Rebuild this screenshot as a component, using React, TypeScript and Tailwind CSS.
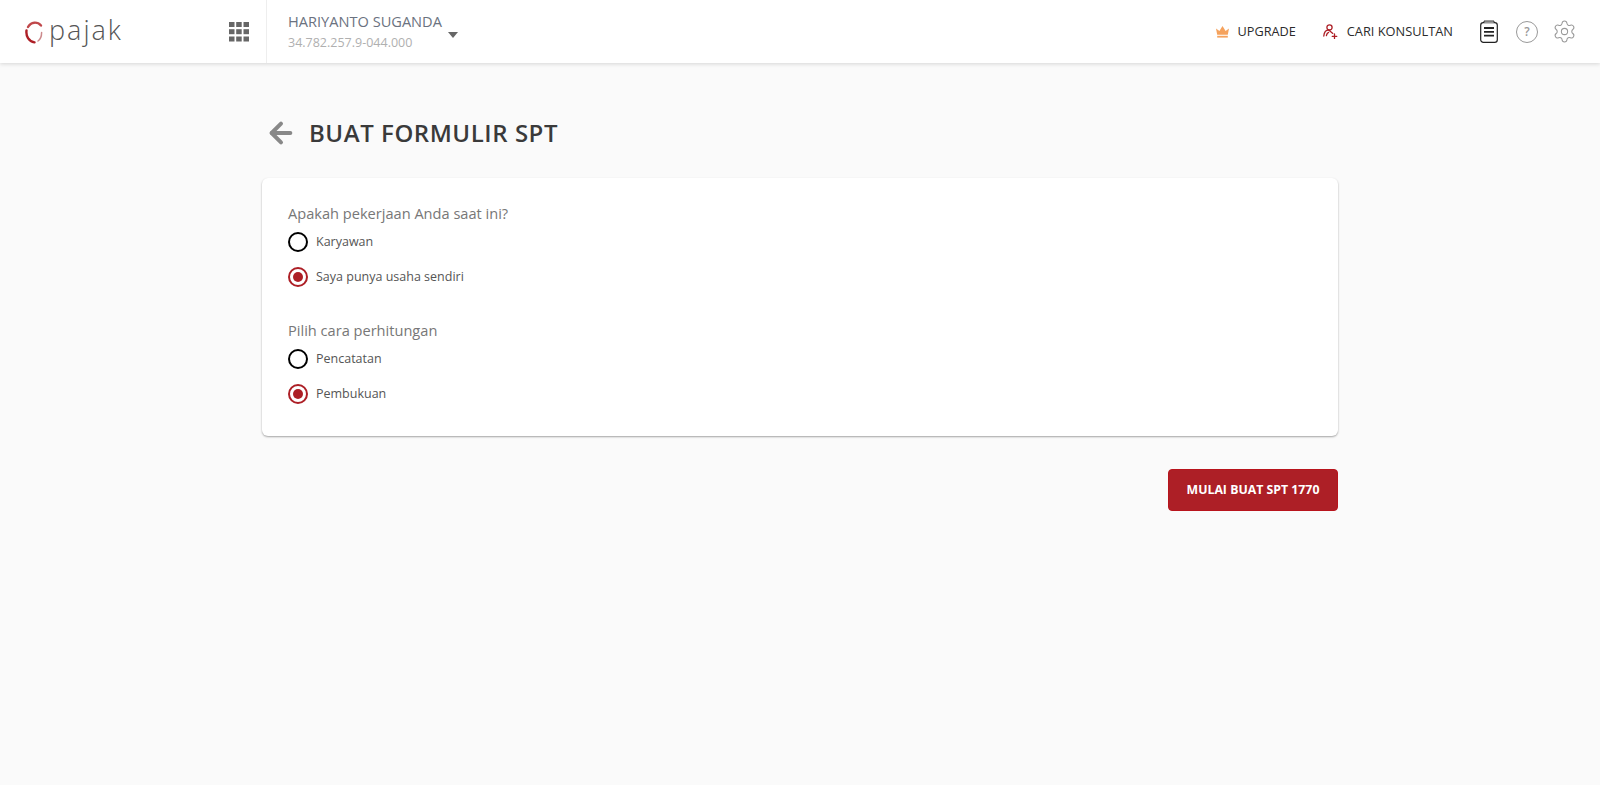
import React from 'react';
import { ArrowLeft, Settings } from 'lucide-react';

const GridIcon = () => (
  <svg width="20" height="20" viewBox="0 0 20 20" fill="#666666">
    <rect x="0" y="0" width="5.5" height="5" />
    <rect x="7.2" y="0" width="5.5" height="5" />
    <rect x="14.5" y="0" width="5.5" height="5" />
    <rect x="0" y="7.2" width="5.5" height="5" />
    <rect x="7.2" y="7.2" width="5.5" height="5" />
    <rect x="14.5" y="7.2" width="5.5" height="5" />
    <rect x="0" y="14.5" width="5.5" height="5" />
    <rect x="7.2" y="14.5" width="5.5" height="5" />
    <rect x="14.5" y="14.5" width="5.5" height="5" />
  </svg>
);

const LogoRing = () => (
  <svg width="18" height="24" viewBox="0 0 18 24" fill="none" strokeLinecap="round">
    <path d="M3 7 C 6 1.5 12.5 1.5 16 5.5" stroke="#c0474a" strokeWidth="2.4" />
    <path d="M1.5 10.5 C 0.8 16 3.6 21.5 9.5 22.4" stroke="#ad1f26" strokeWidth="2.4" />
    <path d="M13 21 C 15.4 19.4 16.6 16.4 16.6 12.5" stroke="#cc8a8c" strokeWidth="1.5" />
  </svg>
);

const CrownIcon = () => (
  <svg width="13" height="12" viewBox="0 0 13 12" fill="#f5a25d">
    <path d="M0 2.5 L3.4 5 L6.5 0 L9.6 5 L13 2.5 L11.8 8.8 H1.2 Z" />
    <rect x="1.2" y="9.8" width="10.6" height="1.8" />
  </svg>
);

const ConsultantIcon = () => (
  <svg width="15" height="15" viewBox="0 0 15 15" fill="none" stroke="#ad1f26" strokeWidth="1.3" strokeLinecap="round">
    <circle cx="6.5" cy="3.4" r="2.6" />
    <path d="M0.8 12 C 1.2 8 3 6 5.5 6" />
    <path d="M3.4 11.5 C 3.8 9.8 4.6 8.8 5.6 8.4" />
    <path d="M6 6.2 L 9.8 9.4" />
    <path d="M11.5 10 V 14.6 M9.2 12.3 H 13.8" />
  </svg>
);

const ClipboardIcon = () => (
  <svg width="18" height="23" viewBox="0 0 18 23" fill="none" stroke="#222222">
    <rect x="0.7" y="2.7" width="16.6" height="19.6" rx="2.6" strokeWidth="1.2" />
    <path d="M4 2.7 V 1 H 14 V 2.7" fill="#cccccc" strokeWidth="0.9" />
    <path d="M4 8 H 14 M4 11.8 H 14 M4 15.6 H 14" strokeWidth="1.8" />
  </svg>
);

const HelpIcon = () => (
  <div className="flex h-[22px] w-[22px] items-center justify-center rounded-full border border-[#999999] text-[12px] font-semibold text-[#999999]">
    ?
  </div>
);

const Radio = ({ label, checked }: { label: string; checked?: boolean }) => (
  <label className="flex h-[35px] items-center">
    <span
      className={`flex h-[20px] w-[20px] items-center justify-center rounded-full border-2 ${
        checked ? 'border-[#ad1f26]' : 'border-black'
      }`}
    >
      {checked && <span className="h-[10px] w-[10px] rounded-full bg-[#ad1f26]" />}
    </span>
    <span className="mt-[1px] ml-[8px] text-[12.5px] text-[#555555]">{label}</span>
  </label>
);

export default function App() {
  return (
    <div className="min-h-[785px] bg-[#fafafa] font-['Open_Sans',sans-serif]">
      <header className="flex h-[63px] items-center bg-white shadow-[0_1px_4px_rgba(0,0,0,0.15)]">
        <div className="flex w-[266px] items-center">
          <div className="ml-[25px] flex items-center gap-[6px]">
            <LogoRing />
            <span className="mb-[5px] text-[27px] leading-none font-light tracking-[2px] text-[#555555]">pajak</span>
          </div>
          <div className="ml-auto mr-[17px]">
            <GridIcon />
          </div>
        </div>
        <div className="flex h-full items-center border-l border-[#eeeeee] pl-[21px]">
          <div className="pb-[1px]">
            <div className="text-[14.6px] leading-[20px] text-[#6b7280]">HARIYANTO SUGANDA</div>
            <div className="mt-[3px] text-[12.5px] leading-[18px] text-[#b0b0b0]">34.782.257.9-044.000</div>
          </div>
          <div className="mt-[6px] ml-[6px] h-0 w-0 border-x-[5px] border-t-[6px] border-x-transparent border-t-[#666666]" />
        </div>
        <div className="ml-auto flex items-center pr-[23px]">
          <CrownIcon />
          <span className="ml-[9px] text-[12.7px] text-[#2b2b2b]">UPGRADE</span>
          <span className="ml-[27px]">
            <ConsultantIcon />
          </span>
          <span className="ml-[9px] text-[12.8px] text-[#2b2b2b]">CARI KONSULTAN</span>
          <span className="ml-[27px]">
            <ClipboardIcon />
          </span>
          <span className="ml-[18px]">
            <HelpIcon />
          </span>
          <Settings size={25} strokeWidth={1} className="ml-[14px] text-[#999999]" />
        </div>
      </header>

      <main className="mx-auto w-[1076px] pt-[52px]">
        <div className="flex h-[36px] items-center">
          <ArrowLeft size={32} strokeWidth={3} className="ml-[3px] text-[#888888]" />
          <h1 className="ml-[12px] text-[24px] font-semibold tracking-[0.55px] text-[#3a3a3a]">BUAT FORMULIR SPT</h1>
        </div>

        <section className="mt-[27px] h-[258px] rounded-[6px] bg-white px-[26px] pt-[25px] shadow-[0_1px_2px_rgba(0,0,0,0.35)]">
          <div className="text-[14.6px] leading-[20px] text-[#777777]">Apakah pekerjaan Anda saat ini?</div>
          <div className="mt-[1px]">
            <Radio label="Karyawan" />
            <Radio label="Saya punya usaha sendiri" checked />
          </div>
          <div className="mt-[26px] text-[14.6px] leading-[20px] text-[#777777]">Pilih cara perhitungan</div>
          <div className="mt-[1px]">
            <Radio label="Pencatatan" />
            <Radio label="Pembukuan" checked />
          </div>
        </section>

        <div className="mt-[33px] flex justify-end">
          <button className="h-[42px] w-[170px] rounded-[4px] border border-[#b8141c] bg-[#ad1f26] text-[12.3px] font-bold text-white">
            MULAI BUAT SPT 1770
          </button>
        </div>
      </main>
    </div>
  );
}
